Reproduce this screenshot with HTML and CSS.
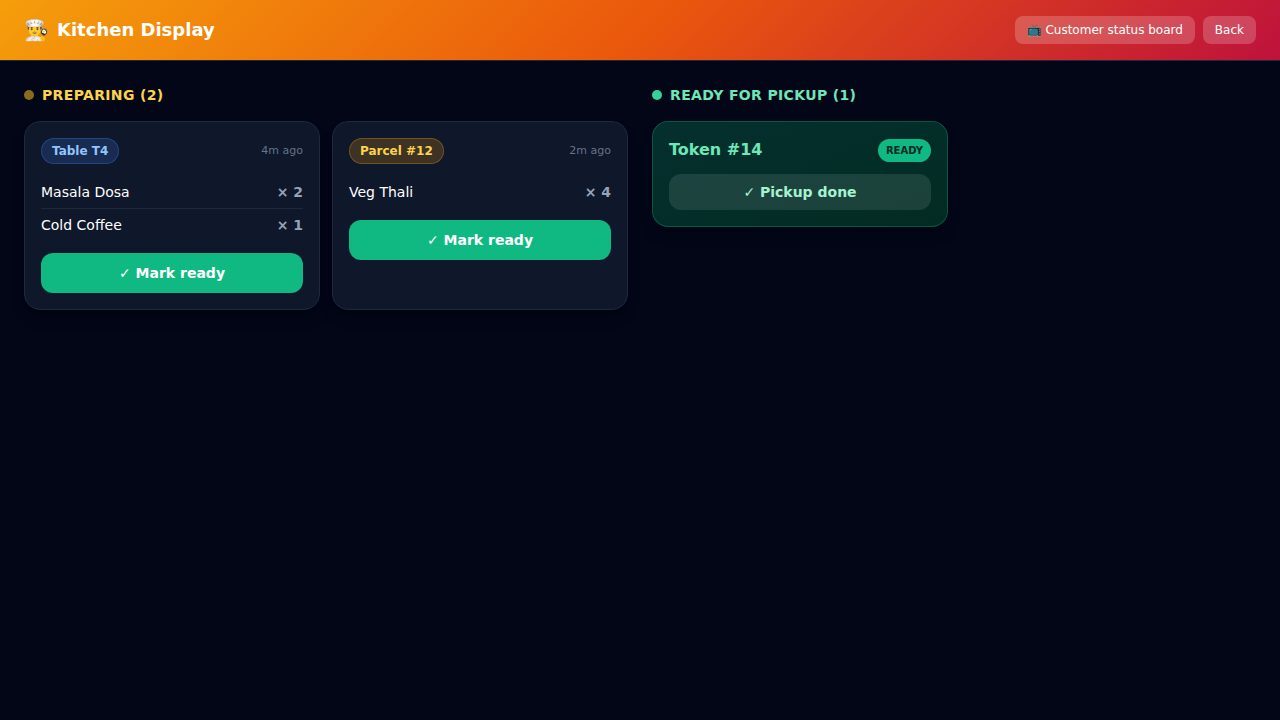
FILE: index.html
```html
<!DOCTYPE html>
<html lang="en">
<head>
  <meta charset="utf-8">
  <title>Kitchen Display</title>
  <meta name="viewport" content="width=device-width, initial-scale=1">
  <link rel="stylesheet" href="styles.css">
</head>
<body>
  <header class="topbar">
    <div class="brand">
      <span class="brand-icon">👨‍🍳</span>
      <h1>Kitchen Display</h1>
    </div>
    <nav class="topbar-links">
      <a href="#status">📺 Customer status board</a>
      <a href="#back">Back</a>
    </nav>
  </header>

  <main class="board">
    <!-- Orders being cooked -->
    <section>
      <h2 class="preparing"><span class="dot"></span>Preparing (2)</h2>
      <div class="cards">
        <article class="card">
          <div class="card-head">
            <span class="tag tag-table">Table T4</span>
            <span class="time">4m ago</span>
          </div>
          <ul class="items">
            <li><span>Masala Dosa</span><span class="qty">× 2</span></li>
            <li><span>Cold Coffee</span><span class="qty">× 1</span></li>
          </ul>
          <button class="btn-ready" type="button">✓ Mark ready</button>
        </article>

        <article class="card">
          <div class="card-head">
            <span class="tag tag-parcel">Parcel #12</span>
            <span class="time">2m ago</span>
          </div>
          <ul class="items">
            <li><span>Veg Thali</span><span class="qty">× 4</span></li>
          </ul>
          <button class="btn-ready" type="button">✓ Mark ready</button>
        </article>
      </div>
    </section>

    <!-- Orders waiting for pickup -->
    <section>
      <h2 class="ready"><span class="dot"></span>Ready for pickup (1)</h2>
      <div class="cards">
        <article class="card card-ready">
          <div class="card-head">
            <span class="token">Token #14</span>
            <span class="ready-badge">READY</span>
          </div>
          <button class="btn-pickup" type="button">✓ Pickup done</button>
        </article>
      </div>
    </section>
  </main>
</body>
</html>
```

FILE: styles.css
```css
* {
  box-sizing: border-box;
}

body {
  margin: 0;
  min-height: 100vh;
  background: #020617;
  color: #fff;
  font-family: "DejaVu Sans", sans-serif;
  font-size: 14px;
  line-height: 20px;
}

h1, h2, ul {
  margin: 0;
  padding: 0;
}

button {
  display: block;
  width: 100%;
  border: none;
  border-radius: 12px;
  font: inherit;
  font-weight: bold;
  cursor: pointer;
}

/* Top bar */
.topbar {
  display: flex;
  align-items: center;
  justify-content: space-between;
  padding: 16px 24px;
  border-bottom: 1px solid #1e293b;
  background: linear-gradient(135deg, #f59e0b, #ea580c, #be123c);
}

.brand {
  display: flex;
  align-items: center;
  gap: 8px;
}

.brand-icon {
  font-size: 20px;
  line-height: 28px;
}

.brand h1 {
  font-size: 18px;
  line-height: 28px;
}

.topbar-links {
  display: flex;
  gap: 8px;
}

.topbar-links a {
  padding: 6px 12px;
  border-radius: 8px;
  background: rgba(255, 255, 255, 0.2);
  color: #fff;
  font-size: 12px;
  line-height: 16px;
  text-decoration: none;
}

/* Columns */
.board {
  display: grid;
  grid-template-columns: 1fr 1fr;
  gap: 24px;
  padding: 24px;
}

h2 {
  display: flex;
  align-items: center;
  gap: 8px;
  margin-bottom: 16px;
  font-size: 14px;
  line-height: 20px;
  letter-spacing: 0.025em;
  text-transform: uppercase;
}

.dot {
  width: 10px;
  height: 10px;
  border-radius: 50%;
}

.preparing {
  color: #fcd34d;
}

.preparing .dot {
  background: #fbbf24;
  opacity: 0.55;
}

.ready {
  color: #6ee7b7;
}

.ready .dot {
  background: #34d399;
}

.cards {
  display: grid;
  grid-template-columns: 1fr 1fr;
  gap: 12px;
}

/* Order card */
.card {
  padding: 16px;
  border: 1px solid #1e293b;
  border-radius: 16px;
  background: #0f172a;
  box-shadow: 0 10px 15px -3px rgba(0, 0, 0, 0.2), 0 4px 6px -4px rgba(0, 0, 0, 0.2);
}

.card-head {
  display: flex;
  align-items: center;
  justify-content: space-between;
  margin-bottom: 12px;
}

.tag {
  padding: 4px 10px;
  border: 1px solid;
  border-radius: 999px;
  font-size: 12px;
  line-height: 16px;
  font-weight: bold;
}

.tag-table {
  border-color: rgba(59, 130, 246, 0.3);
  background: rgba(59, 130, 246, 0.2);
  color: #93c5fd;
}

.tag-parcel {
  border-color: rgba(245, 158, 11, 0.3);
  background: rgba(245, 158, 11, 0.2);
  color: #fcd34d;
}

.time {
  color: #64748b;
  font-size: 11px;
}

.items {
  margin-bottom: 12px;
  list-style: none;
}

.items li {
  display: flex;
  justify-content: space-between;
  padding: 6px 0;
}

.items li + li {
  border-top: 1px solid #1e293b;
}

.qty {
  color: #94a3b8;
  font-weight: bold;
}

.btn-ready {
  padding: 10px;
  background: #10b981;
  color: #fff;
}

/* Ready card */
.card-ready {
  border-color: rgba(16, 185, 129, 0.3);
  background: linear-gradient(to bottom right, #042f2e, #022c22);
}

.token {
  color: #6ee7b7;
  font-size: 16px;
  line-height: 24px;
  font-weight: bold;
}

.ready-badge {
  padding: 4px 8px;
  border-radius: 999px;
  background: #10b981;
  color: #022c22;
  font-size: 10px;
  line-height: 15px;
  font-weight: bold;
}

.btn-pickup {
  padding: 8px;
  background: rgba(255, 255, 255, 0.1);
  color: #a7f3d0;
}
```
